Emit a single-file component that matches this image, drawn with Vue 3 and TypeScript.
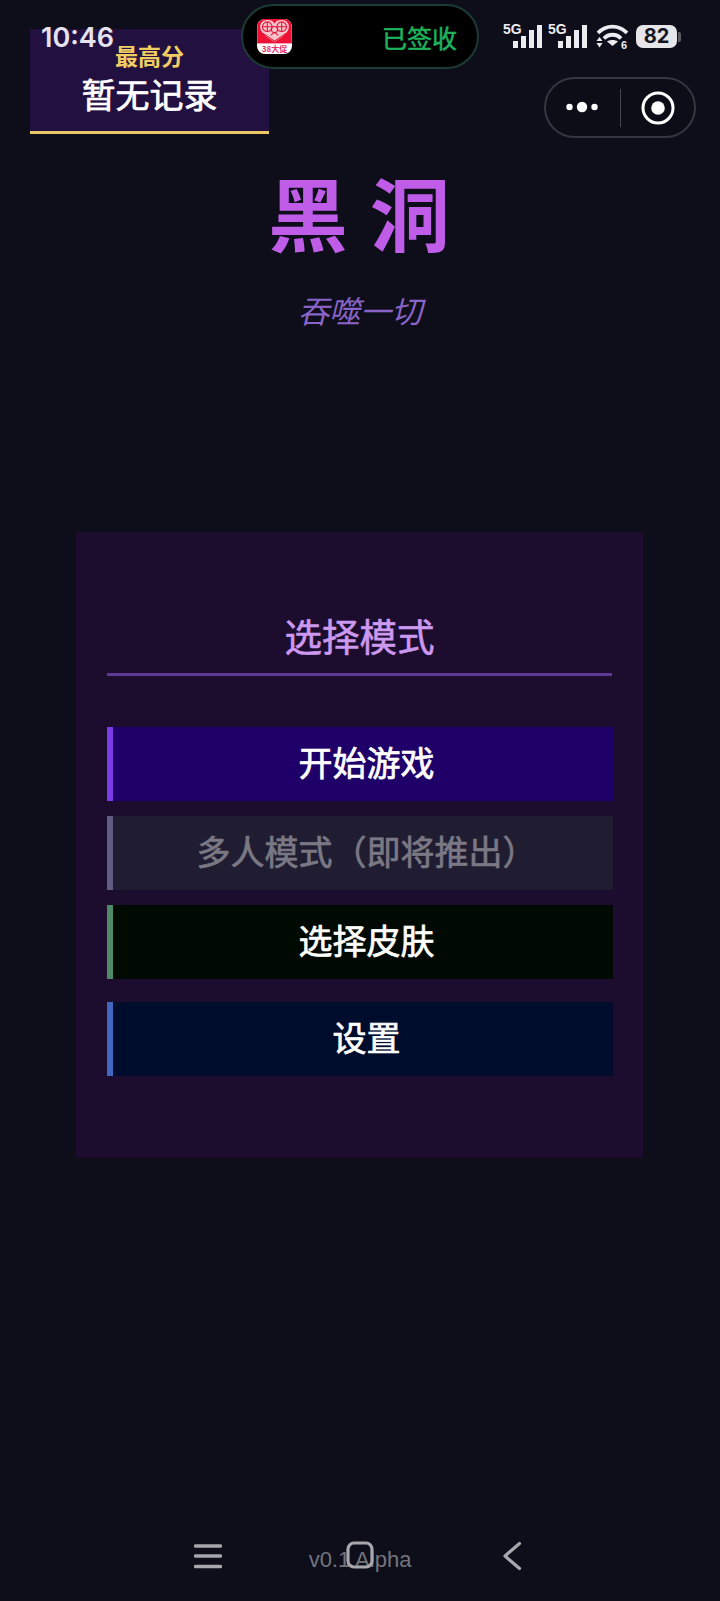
<script setup lang="ts">
interface MenuItem { label: string; kind: string }
const items: MenuItem[] = [
  { label: '开始游戏', kind: 'start' },
  { label: '多人模式（即将推出）', kind: 'multi' },
  { label: '选择皮肤', kind: 'skin' },
  { label: '设置', kind: 'settings' },
]
const signal = [0, 1, 2, 3]
</script>

<template>
  <div class="page">
    <section class="score">
      <div class="score-label">最高分</div>
      <div class="score-value">暂无记录</div>
    </section>

    <header class="hero">
      <h1 class="title">黑洞</h1>
      <p class="subtitle">吞噬一切</p>
    </header>

    <section class="panel">
      <h2 class="panel-title">选择模式</h2>
      <div class="menu">
        <button v-for="item in items" :key="item.kind" class="btn" :class="item.kind">{{ item.label }}</button>
      </div>
    </section>

    <footer class="version">v0.1 Alpha</footer>

    <!-- system overlays -->
    <div class="time">10:46</div>
    <div class="island">
      <div class="app-icon">
        <svg class="heart" viewBox="0 0 36 25" width="35" height="24">
          <rect width="36" height="25" fill="#ee1133" />
          <path d="M18 24 C10 19 3 14 3 8 C3 3 7 1 11 1 C14 1 17 2 18 5 C19 2 22 1 25 1 C29 1 33 3 33 8 C33 14 26 19 18 24 Z" fill="#f9c3cb" />
          <g fill="none" stroke="#e01638" stroke-width="1.1">
            <circle cx="10.5" cy="8" r="5" />
            <circle cx="25.5" cy="8" r="5" />
            <circle cx="18" cy="11" r="3.2" />
            <path d="M6 15 L18 23 L30 15 M10.5 3 V13 M25.5 3 V13 M5.5 8 H15.5 M20.5 8 H30.5 M14 17 L18 14 L22 17" />
          </g>
        </svg>
        <div class="app-band"></div>
        <div class="app-text">38大促</div>
      </div>
      <span class="signed">已签收</span>
    </div>

    <div class="status">
      <div v-for="n in 2" :key="n" class="cell">
        <span class="five-g">5G</span>
        <span class="bars"><i v-for="b in signal" :key="b" :class="'b' + b"></i></span>
      </div>
      <svg class="wifi" width="32" height="25" viewBox="0 0 32 25">
        <path d="M2 9 C10 0.5 23 0.5 31 9" fill="none" stroke="#ecebf0" stroke-width="3.8" />
        <path d="M8 14.5 C12.5 9.5 20.5 9.5 25 14.5" fill="none" stroke="#ecebf0" stroke-width="3.8" />
        <path d="M16.5 22 L11 17.5 C14 15.5 19 15.5 22 17.5 Z" fill="#ecebf0" />
        <path d="M3.5 13 L6.5 17 H0.5 Z M0.5 19 H6.5 L3.5 23.5 Z" fill="#ecebf0" />
        <text x="25" y="24.5" class="wifi-six">6</text>
      </svg>
      <div class="battery"><span>82</span></div>
      <i class="battery-tip"></i>
    </div>

    <div class="capsule">
      <svg class="dots" width="40" height="14" viewBox="0 0 40 14">
        <circle cx="7.5" cy="7" r="3.2" fill="#fff" />
        <circle cx="20" cy="7" r="5.2" fill="#fff" />
        <circle cx="32.5" cy="7" r="3.2" fill="#fff" />
      </svg>
      <i class="capsule-line"></i>
      <svg class="target" width="34" height="34" viewBox="0 0 34 34">
        <circle cx="17" cy="17" r="15" fill="none" stroke="#fff" stroke-width="3" />
        <circle cx="17" cy="17" r="6.8" fill="#fff" />
      </svg>
    </div>

    <svg class="nav nav-menu" width="28" height="26" viewBox="0 0 28 26">
      <path d="M1.5 3 H26.5 M1.5 13 H26.5 M1.5 23.5 H26.5" stroke="#a8a7ae" stroke-width="3.4" stroke-linecap="round" />
    </svg>
    <svg class="nav nav-home" width="28" height="28" viewBox="0 0 28 28">
      <rect x="2" y="2" width="24" height="24" rx="6" fill="none" stroke="#a8a7ae" stroke-width="3.2" />
    </svg>
    <svg class="nav nav-back" width="20" height="30" viewBox="0 0 20 30">
      <path d="M17.5 2.5 L3 15 L17.5 27.5" fill="none" stroke="#a8a7ae" stroke-width="3.2" stroke-linecap="round" stroke-linejoin="round" />
    </svg>
  </div>
</template>

<style>
html, body { margin: 0; background: #0d0e1a; }
</style>

<style scoped>
.page {
  position: relative;
  width: 720px;
  height: 1601px;
  overflow: hidden;
  display: flex;
  flex-direction: column;
  background: #0d0e1a;
  font-family: "Noto Sans CJK SC", "Noto Sans", sans-serif;
  color: #fff;
}
.score {
  box-sizing: border-box;
  width: 239px;
  height: 105px;
  margin: 29px 0 0 30px;
  background: #221040;
  border-bottom: 3px solid #ecc766;
  text-align: center;
}
.score-label {
  margin-top: 11px;
  font-size: 23px;
  line-height: 30px;
  font-weight: 700;
  color: #f0cc62;
}
.score-value {
  font-size: 34px;
  line-height: 46px;
  font-weight: 400;
  -webkit-text-stroke: 0.7px #fff;
  color: #fff;
  margin-top: 1px;
}
.hero { text-align: center; margin-top: 18px; }
.title {
  margin: 0;
  font-size: 80px;
  line-height: 116px;
  font-weight: 700;
  letter-spacing: 22px;
  padding-left: 20px;
  color: #bf5de8;
}
.subtitle {
  margin: 20px 0 0;
  font-size: 31px;
  line-height: 44px;
  font-style: italic;
  color: #8a63c8;
}
.panel {
  box-sizing: border-box;
  width: 567px;
  height: 626px;
  margin: 200px 0 0 76px;
  padding: 76px 31px 0;
  background: #1c0d2e;
}
.panel-title {
  margin: 0;
  height: 68px;
  box-sizing: border-box;
  font-size: 37.5px;
  line-height: 54px;
  font-weight: 400;
  -webkit-text-stroke: 0.6px #cc98f0;
  text-align: center;
  color: #cc98f0;
  border-bottom: 3px solid #5e3a96;
}
.menu {
  margin-top: 51px;
  display: flex;
  flex-direction: column;
}
.btn {
  display: block;
  box-sizing: border-box;
  width: 506px;
  height: 74px;
  padding: 0 0 4px 7px;
  border: 0;
  border-left: 6px solid;
  border-radius: 0;
  font-family: inherit;
  font-size: 34px;
  font-weight: 400;
  -webkit-text-stroke: 0.7px currentColor;
  line-height: 70px;
  text-align: center;
  color: #fff;
}
.start { background: #1e0068; border-left-color: #7a3ce8; }
.multi { margin-top: 15px; background: #201d33; border-left-color: #625c80; color: #7a7883; }
.skin { margin-top: 15px; background: #000a02; border-left-color: #4f8a68; }
.settings { margin-top: 23px; background: #000c2b; border-left-color: #4068c0; }
.version {
  margin-top: auto;
  padding-bottom: 28px;
  text-align: center;
  font-family: "Liberation Sans", Arial, sans-serif;
  font-size: 22px;
  line-height: 26px;
  color: #74747c;
}
.time {
  position: absolute;
  left: 41px;
  top: 20px;
  font-family: Inter, "Noto Sans", sans-serif;
  font-size: 27px;
  line-height: 36px;
  font-weight: 600;
  color: #e6e3ee;
}
.island {
  position: absolute;
  left: 241px;
  top: 4px;
  box-sizing: border-box;
  width: 238px;
  height: 65px;
  border-radius: 33px;
  background: #000;
  border: 2px solid #1d3a34;
  display: flex;
  align-items: center;
  justify-content: space-between;
  padding: 0 20px 0 14px;
}
.app-icon {
  position: relative;
  width: 35px;
  height: 35px;
  border-radius: 8px;
  overflow: hidden;
  background: #fff;
}
.heart { display: block; }
.app-band {
  height: 3px;
  margin-top: -2px;
  background: #f59ab4;
}
.app-text {
  font-size: 8px;
  line-height: 10px;
  font-weight: 700;
  text-align: center;
  color: #e8306a;
}
.signed {
  font-size: 25px;
  line-height: 34px;
  font-weight: 400;
  -webkit-text-stroke: 0.5px #1fb35e;
  color: #1fb35e;
}
.status {
  position: absolute;
  left: 503px;
  top: 23px;
  display: flex;
  align-items: flex-start;
}
.cell {
  position: relative;
  width: 45px;
  height: 25px;
}
.five-g {
  position: absolute;
  left: 0;
  top: -1px;
  font-family: "Liberation Sans", Arial, sans-serif;
  font-size: 14px;
  line-height: 14px;
  font-weight: 700;
  color: #ecebf0;
}
.bars {
  position: absolute;
  left: 10px;
  bottom: 0;
  display: flex;
  align-items: flex-end;
  gap: 3px;
}
.bars i {
  display: block;
  width: 5px;
  background: #ecebf0;
}
.bars .b0 { height: 7px; }
.bars .b1 { height: 12px; }
.bars .b2 { height: 18px; }
.bars .b3 { height: 23px; }
.wifi { margin: 1px 0 0 3px; }
.wifi-six {
  font-family: "Liberation Sans", Arial, sans-serif;
  font-size: 11px;
  font-weight: 700;
  fill: #ecebf0;
}
.battery {
  box-sizing: border-box;
  width: 41px;
  height: 23px;
  margin: 2px 0 0 8px;
  border-radius: 7px;
  background: #e6e5ea;
  display: flex;
  align-items: center;
  justify-content: center;
}
.battery span {
  font-family: Inter, "Noto Sans", sans-serif;
  font-size: 20px;
  line-height: 23px;
  font-weight: 700;
  color: #15151f;
}
.battery-tip {
  display: block;
  width: 3px;
  height: 10px;
  margin: 9px 0 0 1px;
  border-radius: 0 2px 2px 0;
  background: #5c5c64;
}
.capsule {
  position: absolute;
  left: 544px;
  top: 77px;
  box-sizing: border-box;
  width: 152px;
  height: 61px;
  border-radius: 31px;
  border: 2px solid #363642;
  background: #0d0d18;
}
.dots { position: absolute; left: 16px; top: 21px; }
.capsule-line {
  position: absolute;
  left: 74px;
  top: 10px;
  width: 1px;
  height: 38px;
  background: #46464f;
}
.target { position: absolute; left: 95px; top: 12px; }
.nav { position: absolute; }
.nav-menu { left: 194px; top: 1543px; }
.nav-home { left: 346px; top: 1541px; }
.nav-back { left: 502px; top: 1541px; }
</style>
